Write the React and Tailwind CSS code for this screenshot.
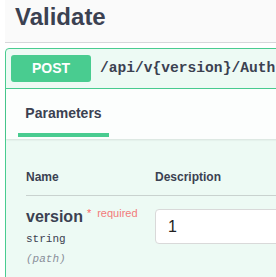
export default function App() {
    return (
        <div className="w-[276px] h-[277px] overflow-hidden bg-white text-[#3b4151] font-['Liberation_Sans',Arial,sans-serif]">
            {/* Tag heading */}
            <div className="pl-[5px]">
                <div className="bg-[#fafafa] border-b border-[#d6d7da] h-[43px] pl-[10px] flex items-start">
                    <h3 className="text-[24px] font-bold leading-none mt-[5px] text-[#3b4151]">Validate</h3>
                </div>
            </div>

            {/* Operation block */}
            <div className="ml-[5px] mt-[5px] w-[300px] border border-[#49cc90] rounded-[4px] bg-[#edfaf4]">
                <div className="flex items-center border-b border-[#49cc90] px-[5px] py-[5px] h-[40px]">
                    <span className="w-[80px] h-[27px] shrink-0 rounded-[3px] bg-[#49cc90] text-white text-[14px] font-bold flex items-center justify-center">
                        POST
                    </span>
                    <span className="ml-[9px] text-[14.6px] font-bold font-['Liberation_Mono',monospace] text-[#3b4151] whitespace-nowrap">
                        /api/v{'{'}version{'}'}/Auth
                    </span>
                </div>

                <div className="bg-[#fcfefd] shadow-[0_1px_2px_rgba(0,0,0,0.1)] h-[50px] px-[12px] flex flex-col justify-end">
                    <div className="w-[91px] flex flex-col">
                        <h4 className="text-[14px] font-bold text-center leading-none mb-[13px]">Parameters</h4>
                        <div className="h-[4px] bg-[#49cc90]" />
                    </div>
                    <div className="h-[2px]" />
                </div>

                <div className="pl-[20px] pt-[32px] h-[200px]">
                    <div className="flex border-b border-[#c9d2cf] pb-[12px] text-[12px] font-bold leading-none">
                        <span className="w-[129px] shrink-0">Name</span>
                        <span>Description</span>
                    </div>
                    <div className="flex pt-[11px]">
                        <div className="w-[129px] shrink-0">
                            <div className="flex items-start">
                                <span className="text-[16px] font-bold leading-[20px]">version</span>
                                <span className="text-[#f66] text-[11px] ml-[4px] leading-[12px]">*</span>
                                <span className="text-[#f27a7a] text-[11px] ml-[6px] leading-[12px]">required</span>
                            </div>
                            <div className="font-['Liberation_Mono',monospace] text-[11px] mt-[5px] leading-[14px]">string</div>
                            <div className="font-['Liberation_Mono',monospace] italic text-[11px] text-[#8a8f9a] mt-[6px] leading-[14px]">(path)</div>
                        </div>
                        <div className="mt-[2px] w-[200px] h-[35px] shrink-0 bg-white border border-[#d9d9d9] rounded-[4px] pl-[12px] flex items-center text-[16px] text-[#222]">
                            1
                        </div>
                    </div>
                </div>
            </div>
        </div>
    );
}
